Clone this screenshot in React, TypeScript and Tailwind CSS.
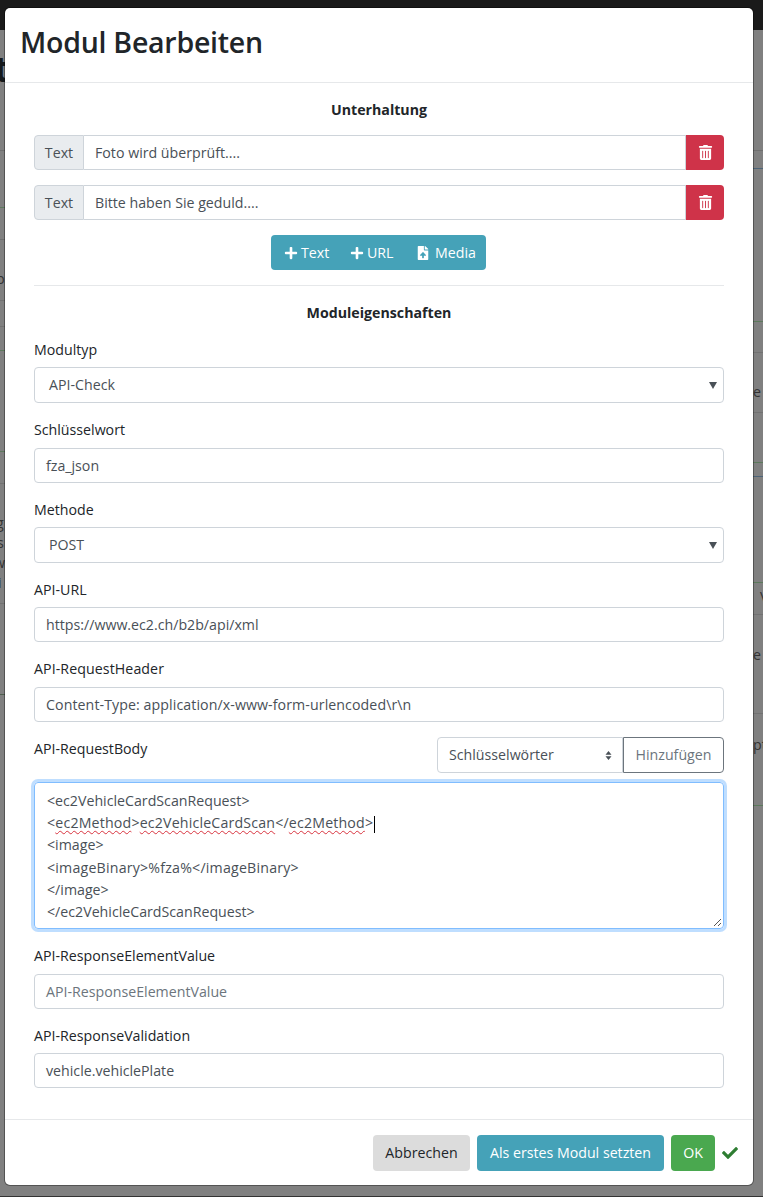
import { FaCheck, FaFileUpload, FaPlus, FaTrashAlt } from "react-icons/fa";

const font = "font-['Open_Sans','Noto_Sans',sans-serif]";

function TextRow({ value }: { value: string }) {
  return (
    <div className="flex h-[35px]">
      <span className="flex w-[50px] items-center justify-center rounded-l border border-[#ced4da] bg-[#e9ecef] text-[#495057]">Text</span>
      <div className="flex flex-1 items-center border-y border-r border-[#ced4da] pl-[11px] text-[#495057]">{value}</div>
      <button className="flex w-[38px] items-center justify-center rounded-r bg-[#cf3349] text-white">
        <FaTrashAlt size={15} />
      </button>
    </div>
  );
}

function Field({ label, value, placeholder, tight, className }: { label: string; value?: string; placeholder?: boolean; tight?: boolean; className?: string }) {
  return (
    <div className={className}>
      <div className="h-[21px] leading-[21px] text-[#212529]">{label}</div>
      <div className={`${tight ? "mt-[7px]" : "mt-[8px]"} flex h-[35px] items-center rounded border border-[#ced4da] px-[11px] ${placeholder ? "text-[#6c757d]" : "text-[#495057]"}`}>
        {value}
      </div>
    </div>
  );
}

function SelectField({ label, value, className }: { label: string; value: string; className?: string }) {
  return (
    <div className={className}>
      <div className="h-[21px] leading-[21px] text-[#212529]">{label}</div>
      <div className="mt-[7px] flex h-[36px] items-center justify-between rounded border border-[#ced4da] pl-[14px] pr-[6px] text-[#495057]">
        <span>{value}</span>
        <svg viewBox="0 0 8 7" className="h-[7px] w-[8px] fill-[#495057]">
          <path d="M0 0h8L4 7z" />
        </svg>
      </div>
    </div>
  );
}

function Squiggle({ children }: { children: string }) {
  return <span className="underline decoration-[#d8333f] decoration-wavy decoration-1 underline-offset-2 [text-decoration-skip-ink:none]">{children}</span>;
}

// hairlines of the page that shows through behind the modal
const leftLines = [
  ["top-[150px]", "bg-[#6f6f6f]"],
  ["top-[207px]", "bg-[#5d7a5d]"],
  ["top-[239px]", "bg-[#6f6f6f]"],
  ["top-[300px]", "bg-[#727272]"],
  ["top-[326px]", "bg-[#727272]"],
  ["top-[350px]", "bg-[#5d7a5d]"],
  ["top-[451px]", "bg-[#5d7a5d]"],
  ["top-[483px]", "bg-[#727272]"],
  ["top-[603px]", "bg-[#727272]"],
  ["top-[694px]", "bg-[#4f5f4f]"],
];

const rightLines = [
  ["top-[150px]", "bg-[#6f6f6f]"],
  ["top-[168px]", "bg-[#4d6478]"],
  ["top-[321px]", "bg-[#5d7a5d]"],
  ["top-[352px]", "bg-[#727272]"],
  ["top-[412px]", "bg-[#727272]"],
  ["top-[462px]", "bg-[#5d7a5d]"],
  ["top-[476px]", "bg-[#4d6478]"],
  ["top-[582px]", "bg-[#5d7a5d]"],
  ["top-[614px]", "bg-[#727272]"],
  ["top-[713px]", "bg-[#727272]"],
  ["top-[805px]", "bg-[#5d7a5d]"],
];

export default function App() {
  return (
    <div className={`relative h-[1197px] w-[763px] overflow-hidden bg-[#808080] pl-[5px] pt-[8px] text-[14.2px] ${font}`}>
      {/* page behind the modal */}
      <div className="absolute inset-x-0 top-0 h-[30px] bg-[#1a1a1a]" />
      <div className="absolute inset-x-0 bottom-0 h-px bg-[#333]" />
      {leftLines.map(([top, color]) => (
        <div key={top} className={`absolute left-0 h-px w-[5px] ${top} ${color}`} />
      ))}
      {rightLines.map(([top, color]) => (
        <div key={top} className={`absolute left-[753px] h-px w-[10px] ${top} ${color}`} />
      ))}
      <div className="absolute left-[-6px] top-[44px] text-[36px] font-bold leading-[50px] text-[#15191c]">t</div>
      <div className="absolute left-[-4px] top-[269px] leading-[20px] text-[#333]">b</div>
      <div className="absolute left-[-4px] top-[513px] leading-[20px] text-[#333]">g</div>
      <div className="absolute left-[-3px] top-[533px] leading-[20px] text-[#333]">s</div>
      <div className="absolute left-[-6px] top-[553px] leading-[20px] text-[#333]">w</div>
      <div className="absolute left-[-2px] top-[573px] leading-[20px] text-[#333]">i</div>
      <div className="absolute left-[753px] top-[382px] leading-[20px] text-[#333]">e</div>
      <div className="absolute left-[753px] top-[645px] leading-[20px] text-[#333]">e</div>
      <div className="absolute left-[753px] top-[735px] leading-[20px] text-[#333]">pt</div>
      <div className="absolute left-[760px] top-[587px] leading-[20px] text-[#333]">V</div>

      <div className="relative flex h-[1177px] w-[748px] flex-col rounded-[5px] bg-white shadow-[0_0_0_1px_rgba(0,0,0,0.35)]">
        <header className="flex h-[75px] shrink-0 items-center border-b border-[#e6e8ea] pb-[6px] pl-[15px]">
          <h1 className="text-[28.5px] font-semibold leading-none tracking-[-0.25px] text-[#212529]">Modul Bearbeiten</h1>
        </header>

        <main className="flex-1 px-[29px]">
          <h2 className="mt-[16px] h-[21px] text-center font-bold leading-[21px] text-[#212529]">Unterhaltung</h2>
          <div className="mt-[15px] flex flex-col gap-[15px]">
            <TextRow value="Foto wird überprüft...." />
            <TextRow value="Bitte haben Sie geduld...." />
          </div>
          <div className="mt-[15px] flex justify-center">
            <div className="mr-[1px] flex h-[35px] w-[215px] items-center rounded bg-[#45a2b8] pl-[13px] text-white">
              <FaPlus size={14} />
              <span className="ml-[3px] w-[26px]">Text</span>
              <FaPlus size={14} className="ml-[23px]" />
              <span className="ml-[3px] w-[27px]">URL</span>
              <FaFileUpload size={14} className="ml-[22px]" />
              <span className="ml-[5px]">Media</span>
            </div>
          </div>
          <div className="mt-[15px] border-t border-[#e6e8ea]" />
          <h2 className="mt-[16px] h-[21px] text-center font-bold leading-[21px] text-[#212529]">Moduleigenschaften</h2>

          <SelectField label="Modultyp" value="API-Check" className="mt-[16px]" />
          <Field label="Schlüsselwort" value="fza_json" className="mt-[16px]" />
          <SelectField label="Methode" value="POST" className="mt-[16px]" />
          <Field label="API-URL" value="https://www.ec2.ch/b2b/api/xml" tight className="mt-[16px]" />
          <Field label="API-RequestHeader" value="Content-Type: application/x-www-form-urlencoded\r\n" className="mt-[16px] tracking-[0.08px]" />

          <div className="mt-[15px] flex h-[36px] items-start justify-between">
            <div className="mt-[1px] text-[#212529]">API-RequestBody</div>
            <div className="flex h-[36px]">
              <div className="flex w-[186px] items-center justify-between rounded-l border border-[#ced4da] pl-[11px] pr-[10px] text-[#495057]">
                <span>Schlüsselwörter</span>
                <svg viewBox="0 0 8 12" className="h-[9px] w-[7px] fill-[#495057]">
                  <path d="M4 0l4 5H0zM4 12L0 7h8z" />
                </svg>
              </div>
              <div className="flex w-[101px] items-center justify-center rounded-r border border-[#6c757d] text-[#6c757d]">Hinzufügen</div>
            </div>
          </div>

          <div className="relative mt-[9px] h-[147px] rounded border border-[#80bdff] px-[12px] pt-[7px] leading-[22.2px] text-[#495057] shadow-[0_0_0_3px_rgba(0,123,255,0.25)]">
            <div>{"<ec2VehicleCardScanRequest>"}</div>
            <div className="tracking-[0.17px]">
              {"<"}
              <Squiggle>ec2Method</Squiggle>
              {">"}
              <Squiggle>ec2VehicleCardScan</Squiggle>
              {"</"}
              <Squiggle>ec2Method</Squiggle>
              {">"}
              <span className="ml-px inline-block h-[17px] w-px bg-black align-middle" />
            </div>
            <div>{"<image>"}</div>
            <div className="tracking-[0.2px]">{"<imageBinary>%fza%</imageBinary>"}</div>
            <div>{"</image>"}</div>
            <div>{"</ec2VehicleCardScanRequest>"}</div>
            <svg viewBox="0 0 9 9" className="absolute bottom-[1px] right-[1px] h-[9px] w-[9px] stroke-[#555]">
              <path d="M1 8l7-7M5 8l3-3" fill="none" />
            </svg>
          </div>

          <Field label="API-ResponseElementValue" value="API-ResponseElementValue" placeholder className="mt-[16px]" />
          <Field label="API-ResponseValidation" value="vehicle.vehiclePlate" tight className="mt-[16px]" />
        </main>

        <footer className="flex h-[66px] shrink-0 items-center justify-end gap-[7px] border-t border-[#e6e8ea] pr-[15px]">
          <button className="flex h-[36px] w-[97px] items-center justify-center rounded bg-[#dcdcdc] text-[#212529]">Abbrechen</button>
          <button className="flex h-[36px] w-[187px] items-center justify-center rounded bg-[#45a2b8] text-white">Als erstes Modul setzten</button>
          <button className="flex h-[36px] w-[44px] items-center justify-center rounded bg-[#4aa84f] text-white">OK</button>
          <FaCheck size={16} className="text-[#2e7d32]" />
        </footer>
      </div>
    </div>
  );
}
